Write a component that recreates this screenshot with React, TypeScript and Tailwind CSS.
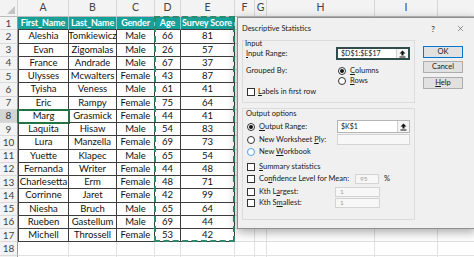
import { X } from 'lucide-react';

const W = [
  'w-[18px]', 'w-[51px]', 'w-[48px]', 'w-[38px]', 'w-[26px]', 'w-[54px]',
  'w-[20px]', 'w-[12px]', 'w-[108px]', 'w-[63px]', 'w-[120px]',
];
// J sits past the right edge of the window, so its letter is not drawn
const LETTERS = ['', 'A', 'B', 'C', 'D', 'E', 'F', 'G', 'H', 'I', ''];
const HEAD = ['First_Name', 'Last_Name', 'Gender', 'Age', 'Survey Score'];
const DATA = [
  ['Aleshia', 'Tomkiewicz', 'Male', '66', '81'],
  ['Evan', 'Zigomalas', 'Male', '26', '57'],
  ['France', 'Andrade', 'Male', '67', '37'],
  ['Ulysses', 'Mcwalters', 'Female', '43', '87'],
  ['Tyisha', 'Veness', 'Male', '61', '41'],
  ['Eric', 'Rampy', 'Female', '75', '64'],
  ['Marg', 'Grasmick', 'Female', '44', '41'],
  ['Laquita', 'Hisaw', 'Male', '54', '83'],
  ['Lura', 'Manzella', 'Female', '69', '73'],
  ['Yuette', 'Klapec', 'Male', '65', '54'],
  ['Fernanda', 'Writer', 'Female', '44', '48'],
  ['Charlesetta', 'Erm', 'Female', '48', '71'],
  ['Corrinne', 'Jaret', 'Female', '42', '99'],
  ['Niesha', 'Bruch', 'Male', '65', '64'],
  ['Rueben', 'Gastellum', 'Male', '69', '44'],
  ['Michell', 'Throssell', 'Female', '53', '42'],
];

function HeaderRow() {
  return (
    <div className="flex h-[17px] shrink-0">
      {LETTERS.map((l, i) => (
        <div
          key={i}
          className={`${W[i]} shrink-0 relative flex items-center justify-center bg-[#f3f3f3] border-r border-b border-r-[#d6d6d6] border-b-[#bcbcbc] text-[10.5px] text-[#444]`}
        >
          {i === 0 ? (
            <svg className="absolute right-[2px] bottom-[2px]" width="8" height="8" viewBox="0 0 8 8">
              <polygon points="8,0 8,8 0,8" fill="#c4c4c4" />
            </svg>
          ) : (
            l
          )}
        </div>
      ))}
    </div>
  );
}

function Row({ n }: { n: number }) {
  const values = n === 1 ? HEAD : n <= 17 ? DATA[n - 2] : [];
  return (
    <div className="flex h-[13.25px] shrink-0">
      <div
        className={`${W[0]} shrink-0 flex items-center justify-center border-r border-b border-b-[#dadada] text-[10px] ${
          n === 8 ? 'bg-[#d4d4d4] text-[#333] border-r-[#9a9a9a]' : 'bg-[#f3f3f3] text-[#444] border-r-[#9a9a9a]'
        }`}
      >
        {n <= 18 ? n : ''}
      </div>
      {W.slice(1).map((w, i) => {
        let cls = 'border-r border-b border-[#e1e1e1] text-[#111] text-[9.5px]';
        if (n === 1 && i < 5) {
          cls = 'bg-[#16a097] text-white font-bold text-[9px] tracking-[-0.15px] border-r border-b border-r-[#7fd0cb] border-b-[#3a3a3a]';
        } else if (n <= 17 && i < 5) {
          cls = `border-r border-b border-[#3c3c3c] text-[#111] text-[9.5px] ${i === 0 ? 'border-l border-l-[#3c3c3c]' : ''}`;
        }
        const active = n === 8 && i === 0 ? 'outline-2 outline-[#217346] -outline-offset-1' : '';
        const align = n === 1 && i === 4 ? 'justify-start pl-[1px]' : 'justify-center';
        return (
          <div
            key={i}
            className={`${w} shrink-0 flex items-center overflow-hidden whitespace-nowrap ${align} ${cls} ${active}`}
          >
            {values[i] ?? ''}
          </div>
        );
      })}
    </div>
  );
}

function Collapse() {
  return (
    <div className="ml-auto w-[12px] h-full flex items-center justify-center border-l border-[#cfcfcf] bg-[#f5f5f5]">
      <svg width="7" height="8" viewBox="0 0 7 8">
        <path d="M3.5 0.5 L6.5 3.5 H4.5 V5.5 H2.5 V3.5 H0.5 Z" fill="#111" />
        <path d="M0.5 7 H6.5" stroke="#111" strokeWidth="1" />
      </svg>
    </div>
  );
}

function Check() {
  return <div className="w-[8px] h-[8px] shrink-0 border border-[#333] bg-white" />;
}

function Radio({ on, blue }: { on?: boolean; blue?: boolean }) {
  return (
    <div
      className={`w-[8px] h-[8px] shrink-0 rounded-full border bg-white flex items-center justify-center ${
        blue ? 'border-[#5aa0d8]' : 'border-[#333]'
      }`}
    >
      {on && <div className="w-[4px] h-[4px] rounded-full bg-[#111]" />}
    </div>
  );
}

function Dialog() {
  return (
    <div className="absolute left-[237px] top-[17px] w-[240px] h-[212px] bg-[#f0f0f0] border border-[#8f8f8f] shadow-[0_3px_10px_rgba(0,0,0,0.35)] flex flex-col font-['Lato',sans-serif] text-[7.5px] text-[#1a1a1a] leading-none">
      {/* Title bar */}
      <div className="h-[21px] shrink-0 flex items-center pl-[4px] pr-[6px]">
        <span className="text-[7.5px]">Descriptive Statistics</span>
        <span className="ml-auto w-[20px] text-center text-[8px]">?</span>
        <span className="w-[7px]" />
        <span className="w-[20px] flex justify-center">
          <X size={9} strokeWidth={1.2} color="#222" />
        </span>
      </div>

      {/* Body */}
      <div className="flex pl-[4px] pt-[1px]">
        <div className="w-[173px] flex flex-col">
          {/* Input group */}
          <div className="h-[63px] border border-[#dcdcdc] flex flex-col">
            <div className="h-[6px] flex items-center pl-[2px]">Input</div>
            <div className="h-[13px] flex items-center">
              <div className="w-[93px] pl-[3px]">
                <span className="underline">I</span>nput Range:
              </div>
              <div className="w-[74px] h-full flex items-center bg-white border-2 border-[#2e4d4b] pl-[3px]">
                <span className="text-[7px]">$D$1:$E$17</span>
                <Collapse />
              </div>
            </div>
            <div className="mt-[6px] h-[10px] flex items-center">
              <div className="w-[95px] pl-[3px]">Grouped By:</div>
              <Radio on />
              <span className="ml-[4px]">
                <span className="underline">C</span>olumns
              </span>
            </div>
            <div className="h-[10px] flex items-center">
              <div className="w-[95px]" />
              <Radio />
              <span className="ml-[4px]">
                <span className="underline">R</span>ows
              </span>
            </div>
            <div className="mt-[1px] h-[10px] flex items-center pl-[4px]">
              <Check />
              <span className="ml-[3px]">
                <span className="underline">L</span>abels in first row
              </span>
            </div>
          </div>

          {/* Output group */}
          <div className="mt-[5px] h-[112px] border border-[#dcdcdc] flex flex-col">
            <div className="h-[10px] flex items-center pl-[3px]">Output options</div>
            <div className="mt-[1px] h-[13px] flex items-center">
              <div className="w-[94px] pl-[4px] flex items-center">
                <Radio on />
                <span className="ml-[4px]">
                  <span className="underline">O</span>utput Range:
                </span>
              </div>
              <div className="w-[73px] h-full flex items-center bg-white border border-[#b5b5b5] pl-[3px]">
                <span className="text-[7px]">$K$1</span>
                <Collapse />
              </div>
            </div>
            <div className="mt-[1px] h-[11px] flex items-center">
              <div className="w-[94px] pl-[4px] flex items-center">
                <Radio />
                <span className="ml-[4px]">
                  New Worksheet <span className="underline">P</span>ly:
                </span>
              </div>
              <div className="w-[73px] h-full bg-[#f7f7f7] border border-[#d4d4d4]" />
            </div>
            <div className="mt-[2px] h-[10px] flex items-center pl-[4px]">
              <Radio blue />
              <span className="ml-[4px]">
                New <span className="underline">W</span>orkbook
              </span>
            </div>
            <div className="mt-[5px] h-[10px] flex items-center pl-[4px]">
              <Check />
              <span className="ml-[4px]">
                <span className="underline">S</span>ummary statistics
              </span>
            </div>
            <div className="mt-[2px] h-[10px] flex items-center">
              <div className="w-[112px] pl-[4px] flex items-center">
                <Check />
                <span className="ml-[4px]">
                  Co<span className="underline">n</span>fidence Level for Mean:
                </span>
              </div>
              <div className="w-[24px] h-full flex items-center bg-[#f7f7f7] border border-[#d4d4d4] pl-[4px] text-[#9a9a9a] text-[6.5px]">
                95
              </div>
              <span className="ml-[5px]">%</span>
            </div>
            <div className="mt-[3px] h-[10px] flex items-center">
              <div className="w-[92px] pl-[4px] flex items-center">
                <Check />
                <span className="ml-[4px]">
                  Kth L<span className="underline">a</span>rgest:
                </span>
              </div>
              <div className="w-[45px] h-full flex items-center bg-[#f7f7f7] border border-[#d4d4d4] pl-[4px] text-[#9a9a9a] text-[6.5px]">
                1
              </div>
            </div>
            <div className="mt-[1px] h-[10px] flex items-center">
              <div className="w-[92px] pl-[4px] flex items-center">
                <Check />
                <span className="ml-[4px]">
                  Kth S<span className="underline">m</span>allest:
                </span>
              </div>
              <div className="w-[45px] h-full flex items-center bg-[#f7f7f7] border border-[#d4d4d4] pl-[4px] text-[#9a9a9a] text-[6.5px]">
                1
              </div>
            </div>
          </div>
        </div>

        {/* Buttons */}
        <div className="ml-[8px] pt-[6px] flex flex-col">
          <div className="w-[40px] h-[12px] flex items-center justify-center bg-[#e1e1e1] border border-[#0078d7]">OK</div>
          <div className="mt-[3px] w-[40px] h-[12px] flex items-center justify-center bg-[#e1e1e1] border border-[#adadad]">
            Cancel
          </div>
          <div className="mt-[4px] w-[40px] h-[12px] flex items-center justify-center bg-[#e1e1e1] border border-[#adadad]">
            <span>
              <span className="underline">H</span>elp
            </span>
          </div>
        </div>
      </div>
    </div>
  );
}

export default function App() {
  const rows = Array.from({ length: 19 }, (_, i) => i + 1);
  return (
    <div className="relative w-[474px] h-[257px] overflow-hidden bg-white font-['Lato',sans-serif]">
      <div className="flex flex-col">
        <HeaderRow />
        {rows.map((n) => (
          <Row key={n} n={n} />
        ))}
      </div>

      {/* copy marquee around D1:E17 */}
      <div className="absolute left-[154px] top-[16px] w-[81px] h-[226px] border-2 border-dashed border-[#2f8a6c] pointer-events-none" />

      <Dialog />
    </div>
  );
}
